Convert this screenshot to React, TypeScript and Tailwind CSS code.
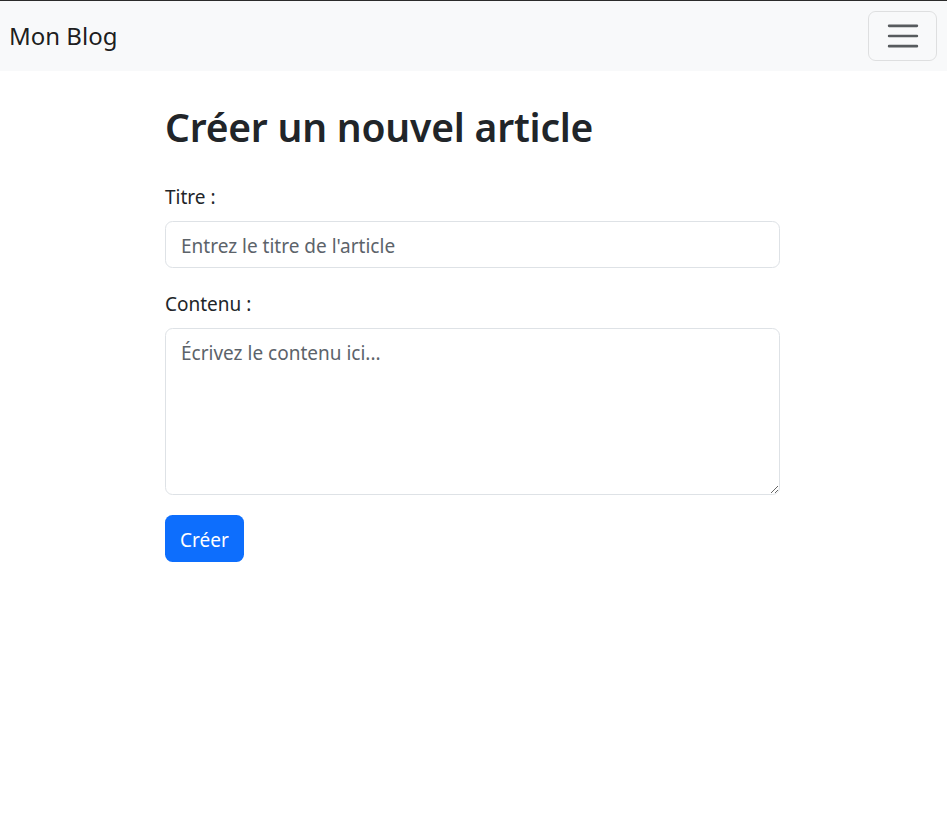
import { useState } from 'react';

export default function App() {
  const [title, setTitle] = useState('');
  const [content, setContent] = useState('');

  return (
    <div className="min-h-screen bg-white text-[#212529] border-t border-[#2b2b2b]" style={{ fontFamily: '"Noto Sans", "Open Sans", sans-serif' }}>
      {/* Navbar */}
      <nav className="h-[70px] bg-[#f8f9fa] flex items-center justify-between pl-[9px] pr-[10px]">
        <a href="#" className="text-[24px] leading-[38px] text-black/90">Mon Blog</a>
        <button
          type="button"
          aria-label="Menu"
          className="w-[69px] h-[50px] rounded-[7.5px] border border-black/10 flex items-center justify-center"
        >
          <svg width="38" height="38" viewBox="0 0 30 30" fill="none">
            <path d="M4 7h22M4 15h22M4 23h22" stroke="rgba(33,37,41,0.75)" strokeWidth="2" strokeLinecap="round" />
          </svg>
        </button>
      </nav>

      {/* Form */}
      <main className="mx-auto w-[617px] pr-[2px] pt-[31px]">
        <h1 className="text-[39px] leading-[50px] font-semibold mb-[29px] tracking-[-0.2px]">Créer un nouvel article</h1>

        <form onSubmit={e => e.preventDefault()}>
          <label htmlFor="titre" className="block text-[19px] leading-[30px] pt-[1px] mb-[9px]">Titre :</label>
          <input
            id="titre"
            value={title}
            onChange={e => setTitle(e.target.value)}
            placeholder="Entrez le titre de l'article"
            className="block w-full h-[47px] px-[15px] pt-[2px] text-[19px] border border-[#dee2e6] rounded-[7.5px] placeholder:text-[#5c636a] outline-none mb-[20px]"
          />

          <label htmlFor="contenu" className="block text-[19px] leading-[30px] pt-[1px] mb-[9px]">Contenu :</label>
          <textarea
            id="contenu"
            rows={5}
            value={content}
            onChange={e => setContent(e.target.value)}
            placeholder="Écrivez le contenu ici..."
            className="block w-full h-[167px] px-[15px] py-[9px] text-[19px] leading-[30px] border border-[#dee2e6] rounded-[7.5px] placeholder:text-[#5c636a] outline-none resize-y mb-[20px]"
          />

          <button type="submit" className="h-[47px] w-[79px] pt-[3px] bg-[#0d6efd] text-white text-[19px] rounded-[7.5px]">
            Créer
          </button>
        </form>
      </main>
    </div>
  );
}
